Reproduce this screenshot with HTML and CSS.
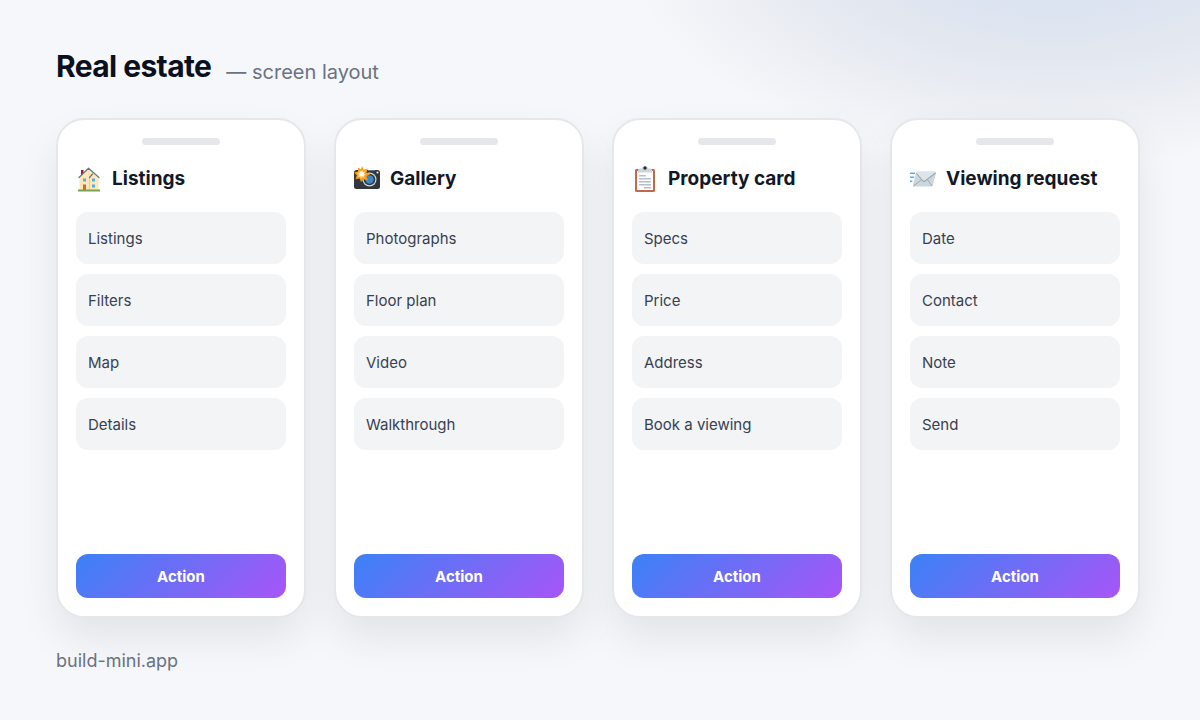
FILE: index.html
```html
<!DOCTYPE html>
<html lang="en">
<head>
  <meta charset="UTF-8" />
  <meta name="viewport" content="width=device-width, initial-scale=1.0"/>
  <title>Real estate</title>
  <link rel="stylesheet" href="styles.css">
</head>
<body>

  <div class="page">
    <header class="header">
      <h1>Real estate</h1>
      <p class="subtitle">— screen layout</p>
    </header>

    <main class="screens">
      <!-- Listings -->
      <section class="phone">
        <div class="speaker"></div>
        <h2>
          <svg class="icon" viewBox="0 0 26 26" aria-hidden="true">
            <path fill="#a8143a" d="M5 4h2.500v6H5z"/>
            <path fill="#ffe8b6" d="M3.500 11 12.500 2.500 22.500 12v12h-19z"/>
            <path fill="#f2cf83" d="M13 12h1v12h-1z"/>
            <path fill="none" stroke="#66757f" stroke-width="1.200" stroke-linecap="round" stroke-linejoin="round" d="M3 11.500 12.500 2.200 23 11.500M13.500 11.500 16.500 8"/>
            <path fill="#55acee" d="M7 12.500h3v3H7zM16 12.500h3v3h-3zM16 18.500h3v3h-3z"/>
            <path fill="#c1694f" d="M7 18.500h3v5.500H7z"/>
            <path fill="#77a353" d="M2 23.500h22v2H2z"/>
          </svg>
          Listings
        </h2>
        <ul class="items">
          <li>Listings</li>
          <li>Filters</li>
          <li>Map</li>
          <li>Details</li>
        </ul>
        <button class="btn" type="button">Action</button>
      </section>

      <!-- Gallery -->
      <section class="phone">
        <div class="speaker"></div>
        <h2>
          <svg class="icon" viewBox="0 0 26 26" aria-hidden="true">
            <rect x="0" y="4" width="26" height="19" rx="2.500" fill="#31373d"/>
            <path fill="#66757f" d="M14 4h7v1h-7z"/>
            <circle cx="23.500" cy="6.500" r="1" fill="#fff"/>
            <circle cx="15.500" cy="13.500" r="7" fill="#ccd6dd"/>
            <circle cx="15.500" cy="13.500" r="5.800" fill="#31373d"/>
            <circle cx="15.500" cy="13.500" r="4.200" fill="#3b88c3"/>
            <path fill="#f99b1d" d="m8 0 1.800 3.700 4-1.200-1.300 4 3.500 1.700-3.300 2 1 4.300-3.900-1.300L7 16l-1.300-3.600-4.200.8 1.300-4L0 6.500l4-1L4 1.500l3 1.800z"/>
            <path fill="#ffd679" d="m8 3.500.8 2.300 2.500-.6-1 2.300 2 1-2.100 1 .4 2.400-2.200-.9L7 13l-.9-2.400-2.300.3 1-2.100L3 7l2.300-.4.3-2L7 5.300z"/>
            <circle cx="7.700" cy="8" r="2.400" fill="#fff"/>
          </svg>
          Gallery
        </h2>
        <ul class="items">
          <li>Photographs</li>
          <li>Floor plan</li>
          <li>Video</li>
          <li>Walkthrough</li>
        </ul>
        <button class="btn" type="button">Action</button>
      </section>

      <!-- Property card -->
      <section class="phone">
        <div class="speaker"></div>
        <h2>
          <svg class="icon" viewBox="0 0 26 26" aria-hidden="true">
            <rect x="3" y="3" width="20" height="23" rx="1.500" fill="#c1694f"/>
            <path fill="#fff" d="M5 5h16v19H5z"/>
            <path fill="#ccd6dd" d="M6 6.500V4q0-1 2-1.500h2Q10.500 0 13 0t3 2.500h2q2 .5 2 1.500v2.500z"/>
            <circle cx="13" cy="2" r="1.700" fill="#292f33"/>
            <path fill="#b4c0c9" d="M7 9h7v1.400H7zM7 12h12v1.400H7zM7 15h12v1.400H7zM7 18h12v1.400H7zM12 21h7v1.400h-7z"/>
          </svg>
          Property card
        </h2>
        <ul class="items">
          <li>Specs</li>
          <li>Price</li>
          <li>Address</li>
          <li>Book a viewing</li>
        </ul>
        <button class="btn" type="button">Action</button>
      </section>

      <!-- Viewing request -->
      <section class="phone">
        <div class="speaker"></div>
        <h2>
          <svg class="icon" viewBox="0 0 26 26" aria-hidden="true">
            <path fill="#ccd6dd" d="M7.500 5.500H25q1.500 0 1 1.500l-3 12q-.5 1.500-2 1.500H4q-1.500 0-1-1.500L6 7q.3-1.500 1.500-1.500z"/>
            <path fill="none" stroke="#99aab5" stroke-width="1" d="m3.500 20 9-7M22 20l-5-7"/>
            <path fill="#dde5eb" d="M7 6h19l-11 9q-1 .8-2 0L6.500 7z"/>
            <path fill="none" stroke="#99aab5" stroke-width="1.100" stroke-linejoin="round" d="m6.500 7.500 6.500 7.500q1 .8 2 0l10.500-8"/>
            <path fill="#4fb0fa" d="M0 6.500h5.300L5 8H0zM0 10.500h4.300L4 12H0zM0 14.500h2.500L2.200 16H0z"/>
          </svg>
          Viewing request
        </h2>
        <ul class="items">
          <li>Date</li>
          <li>Contact</li>
          <li>Note</li>
          <li>Send</li>
        </ul>
        <button class="btn" type="button">Action</button>
      </section>
    </main>

    <footer class="footer">build-mini.app</footer>
  </div>

</body>
</html>
```
FILE: styles.css
```css
:root {
  --background: #f5f7fb;
  --card-bg: #ffffff;
  --item-bg: #f3f4f6;
  --line: #e5e7eb;
  --text-title: #0b1020;
  --text-main: #111827;
  --text-item: #374151;
  --text-muted: #6b7280;
}

* {
  box-sizing: border-box;
}

body {
  margin: 0;
  min-height: 100vh;
  font-family: Inter, sans-serif;
  color: var(--text-main);
  background-color: var(--background);
  /* soft glow in the top right corner */
  background-image: radial-gradient(
    440px 240px at 88% -72px,
    rgba(59, 130, 246, 0.18) 0%,
    rgba(44, 98, 185, 0.135) 25%,
    rgba(30, 65, 123, 0.09) 50%,
    rgba(15, 33, 62, 0.045) 75%,
    rgba(0, 0, 0, 0) 100%
  );
  background-repeat: no-repeat;
}

.page {
  padding: 48px 60px 48px 56px;
}

.header {
  display: flex;
  align-items: flex-end;
  gap: 15px;
  margin-bottom: 34px;
}

h1 {
  margin: 0;
  font-size: 30px;
  line-height: 36px;
  font-weight: 700;
  letter-spacing: -0.02em;
  color: var(--text-title);
}

.subtitle {
  margin: 0;
  font-size: 20px;
  line-height: 24px;
  color: var(--text-muted);
}

.screens {
  display: grid;
  grid-template-columns: repeat(4, 1fr);
  gap: 28px;
}

.phone {
  display: flex;
  flex-direction: column;
  min-height: 500px;
  padding: 18px;
  background: var(--card-bg);
  border: 2px solid var(--line);
  border-radius: 28px;
  box-shadow: 0 20px 40px rgba(0, 0, 0, 0.08);
}

.speaker {
  align-self: center;
  width: 78px;
  height: 7px;
  border-radius: 4px;
  background: var(--line);
}

h2 {
  display: flex;
  align-items: center;
  gap: 10px;
  margin: 20px 0;
  font-size: 19px;
  line-height: 27px;
  font-weight: 700;
  white-space: nowrap;
}

.icon {
  width: 26px;
  height: 26px;
  flex: none;
}

.items {
  display: flex;
  flex-direction: column;
  gap: 10px;
  margin: 0;
  padding: 0;
  list-style: none;
}

.items li {
  padding: 17px 12px 15px;
  font-size: 15px;
  line-height: 20px;
  color: var(--text-item);
  background: var(--item-bg);
  border-radius: 12px;
}

.btn {
  margin-top: auto;
  padding: 13px 12px 11px;
  font-family: inherit;
  font-size: 15px;
  line-height: 20px;
  font-weight: 700;
  color: white;
  background: linear-gradient(135deg, #3b82f6, #a855f7);
  border: none;
  border-radius: 12px;
  cursor: pointer;
}

.footer {
  margin-top: 32px;
  font-size: 18px;
  line-height: 22px;
  color: var(--text-muted);
}

@media (max-width: 1000px) {
  .screens {
    grid-template-columns: repeat(2, 1fr);
  }
}
```
